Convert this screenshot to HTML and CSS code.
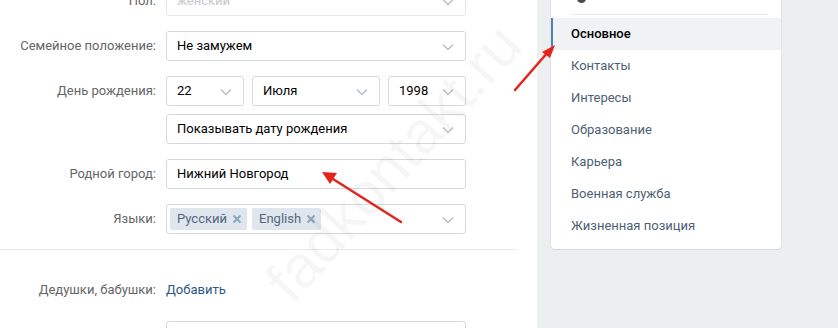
FILE: index.html
```html
<!DOCTYPE html>
<html lang="ru">
<head>
  <meta charset="UTF-8" />
  <meta name="viewport" content="width=device-width, initial-scale=1" />
  <title>Редактирование страницы</title>
  <link rel="stylesheet" href="styles.css">
</head>
<body>
  <div class="page">
    <div class="main">
      <div class="form">
        <div class="row">
          <div class="label">Пол:</div>
          <div class="field">
            <div class="select disabled">женский<svg class="chev" viewBox="0 0 12 8"><polyline points="1,1.5 6,6.5 11,1.5" /></svg></div>
          </div>
        </div>

        <div class="row">
          <div class="label">Семейное положение:</div>
          <div class="field">
            <div class="select">Не замужем<svg class="chev" viewBox="0 0 12 8"><polyline points="1,1.5 6,6.5 11,1.5" /></svg></div>
          </div>
        </div>

        <div class="row">
          <div class="label">День рождения:</div>
          <div class="field">
            <div class="date-line">
              <div class="select day">22<svg class="chev" viewBox="0 0 12 8"><polyline points="1,1.5 6,6.5 11,1.5" /></svg></div>
              <div class="select month">Июля<svg class="chev" viewBox="0 0 12 8"><polyline points="1,1.5 6,6.5 11,1.5" /></svg></div>
              <div class="select year">1998<svg class="chev" viewBox="0 0 12 8"><polyline points="1,1.5 6,6.5 11,1.5" /></svg></div>
            </div>
            <div class="select">Показывать дату рождения<svg class="chev" viewBox="0 0 12 8"><polyline points="1,1.5 6,6.5 11,1.5" /></svg></div>
          </div>
        </div>

        <div class="row">
          <div class="label">Родной город:</div>
          <div class="field">
            <div class="select">Нижний Новгород</div>
          </div>
        </div>

        <div class="row">
          <div class="label">Языки:</div>
          <div class="field">
            <div class="select tags">
              <span class="tag">Русский<svg class="tag-x" viewBox="0 0 10 10"><path d="M1.5 1.5 L8.5 8.5 M8.5 1.5 L1.5 8.5" /></svg></span>
              <span class="tag">English<svg class="tag-x" viewBox="0 0 10 10"><path d="M1.5 1.5 L8.5 8.5 M8.5 1.5 L1.5 8.5" /></svg></span>
              <svg class="chev" viewBox="0 0 12 8"><polyline points="1,1.5 6,6.5 11,1.5" /></svg>
            </div>
          </div>
        </div>
      </div>

      <div class="divider"></div>

      <div class="form lower">
        <div class="row text-row">
          <div class="label">Дедушки, бабушки:</div>
          <div class="field"><a class="link">Добавить</a></div>
        </div>
        <div class="row">
          <div class="label"></div>
          <div class="field"><div class="select"></div></div>
        </div>
      </div>
    </div>

    <div class="side">
      <div class="menu">
        <div class="menu-top"><span class="menu-dot"></span></div>
        <div class="menu-item active">Основное</div>
        <div class="menu-item">Контакты</div>
        <div class="menu-item">Интересы</div>
        <div class="menu-item">Образование</div>
        <div class="menu-item">Карьера</div>
        <div class="menu-item">Военная служба</div>
        <div class="menu-item">Жизненная позиция</div>
      </div>
    </div>
  </div>

  <div class="watermark">fadkontakt.ru</div>

  <svg class="arrows" viewBox="0 0 838 328">
    <g stroke="#e3241d" stroke-width="2.5" stroke-linecap="round" fill="none">
      <line x1="515" y1="90" x2="548" y2="52" />
      <line x1="401" y1="222" x2="333" y2="179" />
    </g>
    <g fill="#e3241d">
      <polygon points="555,45 542,52 550,58" />
      <polygon points="322,172 337,173 330,184" />
    </g>
  </svg>
</body>
</html>
```

FILE: styles.css
```css
body {
  margin: 0;
  background: #edeef0;
  font-family: Roboto, "Noto Sans", Arial, sans-serif;
  font-size: 13px;
  color: #000;
  overflow: hidden;
}
.page {
  display: flex;
  align-items: flex-start;
  height: 328px;
  overflow: hidden;
}
.main {
  width: 537px;
  height: 328px;
  background: #fff;
  flex-shrink: 0;
  overflow: hidden;
}
.form {
  margin-top: -14px;
  padding-right: 71px;
}
.row {
  display: flex;
  align-items: flex-start;
  margin-bottom: 15px;
}
.label {
  width: 156px;
  padding-right: 10px;
  text-align: right;
  color: #656565;
  line-height: 30px;
  flex-shrink: 0;
}
.field {
  width: 300px;
  display: flex;
  flex-direction: column;
  gap: 8px;
}
.select {
  position: relative;
  box-sizing: border-box;
  height: 30px;
  border: 1px solid #d3d9de;
  border-radius: 3px;
  padding: 0 10px;
  line-height: 28px;
  color: #000;
  background: #fff;
}
.select.disabled {
  color: #c5c7cc;
  border-color: #e7e8ec;
}
.chev {
  position: absolute;
  right: 11px;
  top: 11px;
  width: 12px;
  height: 8px;
}
.chev polyline {
  fill: none;
  stroke: #b2bcc6;
  stroke-width: 1.3;
}
.date-line {
  display: flex;
  gap: 8px;
}
.day, .year {
  width: 78px;
}
.month {
  width: 128px;
}
.tags {
  display: flex;
  align-items: center;
  gap: 5px;
  padding-left: 3px;
}
.tag {
  display: inline-flex;
  align-items: center;
  height: 22px;
  padding: 0 5px 0 7px;
  background: #dfe6ed;
  color: #55677d;
  border-radius: 2px;
  line-height: 22px;
}
.tag-x {
  width: 10px;
  height: 10px;
  margin-left: 5px;
}
.tag-x path {
  fill: none;
  stroke: #8ca5bf;
  stroke-width: 2;
}
.divider {
  height: 1px;
  background: #e7e8ec;
  margin: 7px 20px 0 0;
}
.lower {
  margin-top: 25px;
}
.text-row {
  margin-bottom: 16px;
}
.link {
  color: #2a5885;
  line-height: 30px;
  cursor: pointer;
}
.side {
  margin-left: 14px;
  width: 230px;
}
.menu {
  background: #fff;
  border-radius: 0 0 4px 4px;
  box-shadow: 0 1px 0 0 #d7d8db, 0 0 0 1px #e3e4e8;
  padding-bottom: 7px;
}
.menu-top {
  position: relative;
  height: 14px;
  margin: 0 13px 3px 20px;
  border-bottom: 1px solid #e7e8ec;
}
.menu-dot {
  position: absolute;
  left: 6px;
  top: -6px;
  width: 9px;
  height: 9px;
  border-radius: 50%;
  background: #4a4a4a;
}
.menu-item {
  height: 32px;
  line-height: 32px;
  padding-left: 20px;
  color: #4d5f75;
}
.menu-item.active {
  background: #f0f2f5;
  color: #000;
  font-weight: 500;
  box-shadow: inset 2px 0 0 #5181b8;
}
.watermark {
  position: absolute;
  left: 300px;
  top: 252px;
  font-family: "Liberation Sans", Arial, sans-serif;
  font-size: 60px;
  line-height: 60px;
  color: rgba(0, 0, 0, 0.035);
  transform: rotate(-48deg);
  transform-origin: left bottom;
  white-space: nowrap;
  pointer-events: none;
}
.arrows {
  position: absolute;
  left: 0;
  top: 0;
  width: 838px;
  height: 328px;
  pointer-events: none;
}
```
